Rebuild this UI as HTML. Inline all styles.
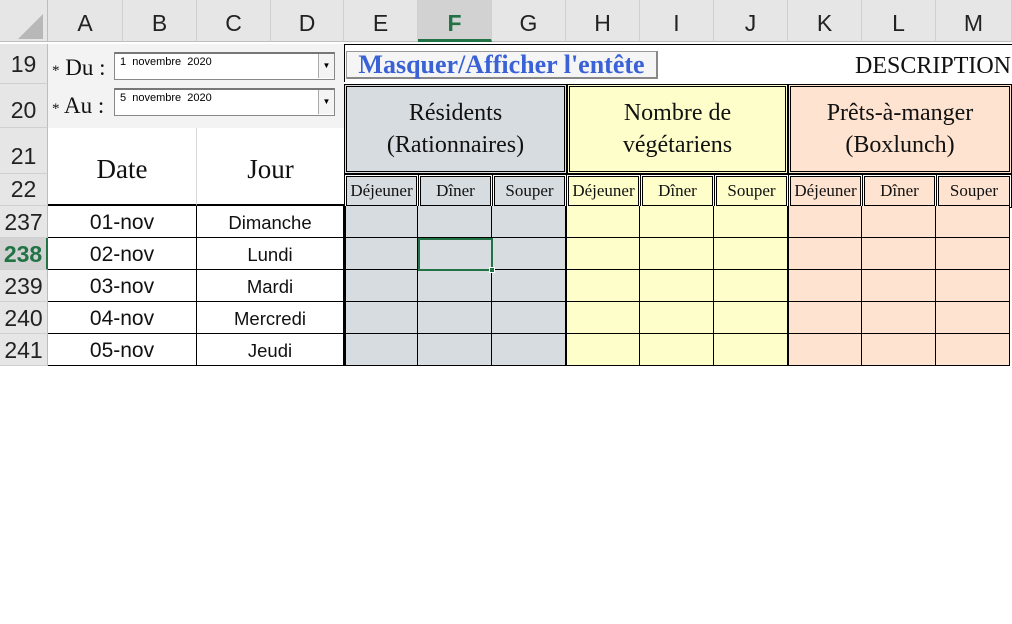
<!DOCTYPE html>
<html><head><meta charset="utf-8"><style>
*{margin:0;padding:0;box-sizing:border-box}
body{width:1012px;height:624px;background:#fff;position:relative;overflow:hidden;font-family:"Liberation Sans",sans-serif}
.a{position:absolute}
.ch{position:absolute;top:0;height:42px;background:#e6e6e6;border-right:1px solid #cfcfcf;border-bottom:1px solid #bdbdbd;font-size:23px;color:#222;text-align:center;line-height:46px;font-family:"Liberation Sans",sans-serif}
.rh{position:absolute;left:0;width:48px;background:#e6e6e6;border-bottom:1px solid #cfcfcf;border-right:1px solid #bdbdbd;font-size:23px;color:#222;text-align:center}
.serif{font-family:"Liberation Serif",serif}
.cell{position:absolute;border-right:1px solid #000;border-bottom:1px solid #000;text-align:center;font-family:"Liberation Sans",sans-serif;font-size:21px;color:#111;line-height:33px}
.sub{position:absolute;top:176px;height:30px;border:1px solid #000;outline:1px solid #000;outline-offset:1px;font-family:"Liberation Serif",serif;font-size:17px;line-height:28px;text-align:center;color:#111;white-space:nowrap;overflow:hidden}
.big{position:absolute;top:84px;height:90px;border:1px solid #000;outline:1px solid #000;outline-offset:-3px;font-family:"Liberation Serif",serif;font-size:24px;text-align:center;line-height:32px;padding-top:12px;color:#111}
.dc{position:absolute;height:32px;border-right:1px solid #000;border-bottom:1px solid #000}
.combo{position:absolute;left:114px;width:221px;height:28px;background:#fff;border:1px solid #888;border-top:2px solid #777;font-size:11px;padding:2px 0 0 5px}
.combo b{position:absolute;right:0;top:0;width:16px;height:24px;border-left:1px solid #aaa;background:#f4f4f4;font-size:8px;text-align:center;line-height:24px;font-weight:normal}
</style></head><body>
<div class="a" style="left:0;top:0;width:48px;height:42px;background:#e6e6e6;border-right:1px solid #bdbdbd;border-bottom:1px solid #bdbdbd"></div>
<svg class="a" style="left:16px;top:12px" width="28" height="28"><polygon points="27,2 27,27 2,27" fill="#b8b8b8"/></svg>
<div class="ch" style="left:48px;width:75px">A</div>
<div class="ch" style="left:123px;width:74px">B</div>
<div class="ch" style="left:197px;width:74px">C</div>
<div class="ch" style="left:271px;width:73px">D</div>
<div class="ch" style="left:344px;width:74px">E</div>
<div class="ch" style="left:418px;width:74px;background:#d2d2d2;color:#217346;font-weight:bold;border-bottom:3px solid #217346">F</div>
<div class="ch" style="left:492px;width:74px">G</div>
<div class="ch" style="left:566px;width:74px">H</div>
<div class="ch" style="left:640px;width:74px">I</div>
<div class="ch" style="left:714px;width:74px">J</div>
<div class="ch" style="left:788px;width:74px">K</div>
<div class="ch" style="left:862px;width:74px">L</div>
<div class="ch" style="left:936px;width:76px">M</div>
<div class="rh" style="top:44px;height:40px;line-height:40px">19</div>
<div class="rh" style="top:84px;height:44px;line-height:52px">20</div>
<div class="rh" style="top:128px;height:46px;line-height:56px">21</div>
<div class="rh" style="top:174px;height:32px;line-height:30px">22</div>
<div class="rh" style="top:206px;height:32px;line-height:32px">237</div>
<div class="rh" style="top:238px;height:32px;line-height:32px;background:#d2d2d2;color:#217346;font-weight:bold;border-right:2px solid #217346">238</div>
<div class="rh" style="top:270px;height:32px;line-height:32px">239</div>
<div class="rh" style="top:302px;height:32px;line-height:32px">240</div>
<div class="rh" style="top:334px;height:32px;line-height:32px">241</div>
<div class="a" style="left:48px;top:44px;width:296px;height:84px;background:#f3f3f3"></div>
<div class="a serif" style="left:52px;top:55px;font-size:23px;color:#111"><span style="font-size:15px">*</span> Du :</div>
<div class="a serif" style="left:52px;top:93px;font-size:23px;color:#111"><span style="font-size:15px">*</span> Au :</div>
<div class="combo" style="top:52px">1&nbsp; novembre&nbsp; 2020<b>▼</b></div>
<div class="combo" style="top:88px">5&nbsp; novembre&nbsp; 2020<b>▼</b></div>
<div class="a serif" style="left:48px;top:128px;width:149px;height:78px;border-right:1px solid #d8d8d8;border-bottom:2px solid #000;font-size:27px;text-align:center;line-height:82px;color:#111">Date</div>
<div class="a serif" style="left:197px;top:128px;width:147px;height:78px;border-bottom:2px solid #000;font-size:27px;text-align:center;line-height:82px;color:#111">Jour</div>
<div class="cell" style="left:48px;top:206px;width:149px;height:32px">01-nov</div>
<div class="cell" style="left:197px;top:206px;width:147px;height:32px;font-size:18.5px">Dimanche</div>
<div class="cell" style="left:48px;top:238px;width:149px;height:32px">02-nov</div>
<div class="cell" style="left:197px;top:238px;width:147px;height:32px;font-size:18.5px">Lundi</div>
<div class="cell" style="left:48px;top:270px;width:149px;height:32px">03-nov</div>
<div class="cell" style="left:197px;top:270px;width:147px;height:32px;font-size:18.5px">Mardi</div>
<div class="cell" style="left:48px;top:302px;width:149px;height:32px">04-nov</div>
<div class="cell" style="left:197px;top:302px;width:147px;height:32px;font-size:18.5px">Mercredi</div>
<div class="cell" style="left:48px;top:334px;width:149px;height:32px">05-nov</div>
<div class="cell" style="left:197px;top:334px;width:147px;height:32px;font-size:18.5px">Jeudi</div>
<div class="a" style="left:344px;top:44px;width:668px;height:38px;border-top:1px solid #000;border-left:1px solid #000"></div>
<div class="a serif" style="left:346px;top:51px;width:312px;height:28px;background:#f5f5f5;border:1px solid #999;border-right:2px solid #888;border-bottom:2px solid #888;color:#3a62d6;font-weight:bold;font-size:26px;line-height:26px;text-align:center;white-space:nowrap">Masquer/Afficher l'entête</div>
<div class="a serif" style="left:855px;top:53px;font-size:24px;color:#111;white-space:nowrap">DESCRIPTION</div>
<div class="big" style="left:344px;width:223px;background:#d6dce0">Résidents<br>(Rationnaires)</div>
<div class="big" style="left:567px;width:221px;background:#fefecb">Nombre de<br>végétariens</div>
<div class="big" style="left:788px;width:224px;background:#fde3d0">Prêts-à-manger<br>(Boxlunch)</div>
<div class="sub" style="left:346px;width:71px;background:#d6dce0">Déjeuner</div>
<div class="sub" style="left:420px;width:71px;background:#d6dce0">Dîner</div>
<div class="sub" style="left:494px;width:71px;background:#d6dce0">Souper</div>
<div class="sub" style="left:568px;width:71px;background:#fefecb">Déjeuner</div>
<div class="sub" style="left:642px;width:71px;background:#fefecb">Dîner</div>
<div class="sub" style="left:716px;width:71px;background:#fefecb">Souper</div>
<div class="sub" style="left:790px;width:71px;background:#fde3d0">Déjeuner</div>
<div class="sub" style="left:864px;width:71px;background:#fde3d0">Dîner</div>
<div class="sub" style="left:938px;width:72px;background:#fde3d0">Souper</div>
<div class="a" style="left:344px;top:206px;width:668px;height:160px;border-left:2px solid #000"></div>
<div id="g"></div>
<script>
var cols=[344,418,492,566,640,714,788,862,936],cl=['#d6dce0','#d6dce0','#d6dce0','#fefecb','#fefecb','#fefecb','#fde3d0','#fde3d0','#fde3d0'],h='';
for(var r=0;r<5;r++)for(var c=0;c<9;c++){var w=74;h+='<div class="dc" style="left:'+(cols[c]+(c==0?2:0))+'px;top:'+(206+r*32)+'px;width:'+(w-(c==0?2:0))+'px;background:'+cl[c]+(c==3||c==6?';border-left:1px solid #000':'')+'"></div>';}
document.getElementById('g').innerHTML=h;
</script>
<div class="a" style="left:418px;top:238px;width:75px;height:33px;border:2px solid #217346"></div>
<div class="a" style="left:489px;top:267px;width:6px;height:6px;background:#217346;border:1px solid #fff"></div>
</body></html>
